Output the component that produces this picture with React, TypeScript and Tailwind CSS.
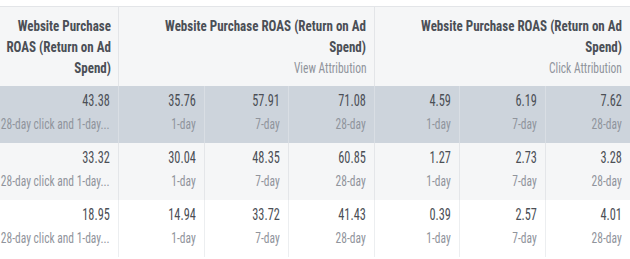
import React from "react";

const font = {
  fontFamily:
    '"Roboto Condensed", "Liberation Sans Narrow", "DejaVu Sans Condensed", "Liberation Sans", Arial, sans-serif',
};

type Cell = [string, string];
const rows: { bg: string; div: string; cells: Cell[] }[] = [
  {
    bg: "bg-[#cdd4dc]",
    div: "border-[#d9dee4]",
    cells: [
      ["43.38", "28-day click and 1-day..."],
      ["35.76", "1-day"],
      ["57.91", "7-day"],
      ["71.08", "28-day"],
      ["4.59", "1-day"],
      ["6.19", "7-day"],
      ["7.62", "28-day"],
    ],
  },
  {
    bg: "bg-[#f5f6f7]",
    div: "border-[#e4e6e9]",
    cells: [
      ["33.32", "28-day click and 1-day..."],
      ["30.04", "1-day"],
      ["48.35", "7-day"],
      ["60.85", "28-day"],
      ["1.27", "1-day"],
      ["2.73", "7-day"],
      ["3.28", "28-day"],
    ],
  },
  {
    bg: "bg-white",
    div: "border-[#eceef0]",
    cells: [
      ["18.95", "28-day click and 1-day..."],
      ["14.94", "1-day"],
      ["33.72", "7-day"],
      ["41.43", "28-day"],
      ["0.39", "1-day"],
      ["2.57", "7-day"],
      ["4.01", "28-day"],
    ],
  },
];

function GroupHeader({ sub, border }: { sub: string; border?: boolean }) {
  return (
    <div
      className={`col-span-3 bg-[#f5f6f7] ${border ? "border-r border-[#e3e5e8]" : ""} h-[79px] pt-[9px] pr-[8px] flex flex-col items-end overflow-hidden`}
    >
      <div className="w-[226px] shrink-0 origin-top-right scale-x-[0.93] text-right text-[14px] leading-[21px] font-bold text-[#4b4f56]">
        Website Purchase ROAS (Return on Ad Spend)
      </div>
      <span className="block origin-right scale-x-[0.82] text-[14px] leading-[21px] text-[#90949c] whitespace-nowrap">
        {sub}
      </span>
    </div>
  );
}

export default function App() {
  return (
    <div className="w-[630px] h-[259px] overflow-hidden bg-white" style={font}>
      <div className="h-[6px] bg-white" />
      <div className="grid grid-cols-[119px_86px_84px_86px_85px_86px_84px] border-t border-[#e3e5e8]">
        <div className="bg-[#f5f6f7] border-r border-[#e3e5e8] h-[79px] pt-[9px] pr-[7px] flex flex-col items-end overflow-hidden">
          <div className="w-[121px] shrink-0 origin-top-right scale-x-[0.93] text-right text-[14px] leading-[21px] font-bold text-[#4b4f56]">
            Website Purchase ROAS (Return on Ad Spend)
          </div>
        </div>
        <GroupHeader sub="View Attribution" border />
        <GroupHeader sub="Click Attribution" />
        {rows.map((r, ri) =>
          r.cells.map((c, ci) => (
            <div
              key={`${ri}-${ci}`}
              className={`${r.bg} ${ci < 6 ? "border-r " + r.div : ""} h-[57px] pt-[3px] pr-[8px] flex flex-col items-end overflow-hidden`}
            >
              <span className="block origin-right scale-x-[0.77] text-[16px] leading-[23px] text-[#4b4f56] whitespace-nowrap">
                {c[0]}
              </span>
              <span className="block origin-right scale-x-[0.82] text-[14px] leading-[24px] text-[#90949c] whitespace-nowrap">
                {c[1]}
              </span>
            </div>
          ))
        )}
      </div>
    </div>
  );
}
